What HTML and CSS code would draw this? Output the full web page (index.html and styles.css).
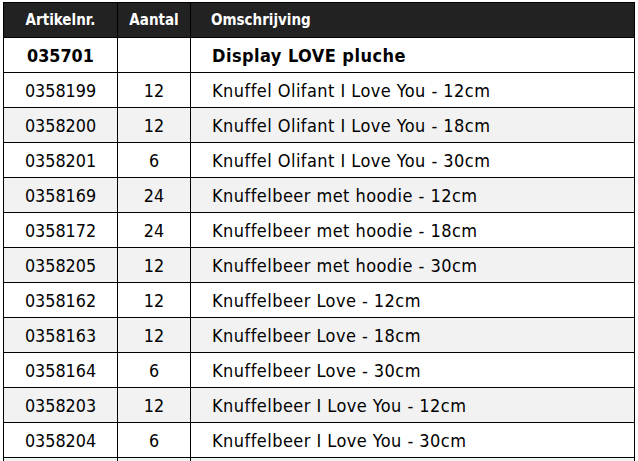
FILE: index.html
```html
<!DOCTYPE html>
<html lang="nl">
<head>
<meta charset="utf-8">
<title>Display LOVE pluche</title>
<link rel="stylesheet" href="styles.css">
</head>
<body>
<table class="products">
  <thead>
    <tr>
      <th class="c-nr">Artikelnr.</th>
      <th class="c-qty">Aantal</th>
      <th class="c-desc">Omschrijving</th>
    </tr>
  </thead>
  <tbody>
    <tr class="group"><td class="c-nr">035701</td><td class="c-qty"></td><td class="c-desc">Display LOVE pluche</td></tr>
    <tr><td class="c-nr">0358199</td><td class="c-qty">12</td><td class="c-desc">Knuffel Olifant I Love You - 12cm</td></tr>
    <tr class="alt"><td class="c-nr">0358200</td><td class="c-qty">12</td><td class="c-desc">Knuffel Olifant I Love You - 18cm</td></tr>
    <tr><td class="c-nr">0358201</td><td class="c-qty">6</td><td class="c-desc">Knuffel Olifant I Love You - 30cm</td></tr>
    <tr class="alt"><td class="c-nr">0358169</td><td class="c-qty">24</td><td class="c-desc">Knuffelbeer met hoodie - 12cm</td></tr>
    <tr><td class="c-nr">0358172</td><td class="c-qty">24</td><td class="c-desc">Knuffelbeer met hoodie - 18cm</td></tr>
    <tr class="alt"><td class="c-nr">0358205</td><td class="c-qty">12</td><td class="c-desc">Knuffelbeer met hoodie - 30cm</td></tr>
    <tr><td class="c-nr">0358162</td><td class="c-qty">12</td><td class="c-desc">Knuffelbeer Love - 12cm</td></tr>
    <tr class="alt"><td class="c-nr">0358163</td><td class="c-qty">12</td><td class="c-desc">Knuffelbeer Love - 18cm</td></tr>
    <tr><td class="c-nr">0358164</td><td class="c-qty">6</td><td class="c-desc">Knuffelbeer Love - 30cm</td></tr>
    <tr class="alt"><td class="c-nr">0358203</td><td class="c-qty">12</td><td class="c-desc">Knuffelbeer I Love You - 12cm</td></tr>
    <tr><td class="c-nr">0358204</td><td class="c-qty">6</td><td class="c-desc">Knuffelbeer I Love You - 30cm</td></tr>
    <tr class="alt"><td class="c-nr"></td><td class="c-qty"></td><td class="c-desc"></td></tr>
  </tbody>
</table>
</body>
</html>
```
FILE: styles.css
```css
html, body {
  margin: 0;
  padding: 0;
  background: #ffffff;
}

body {
  padding: 2px 0 0 3px;
  font-family: "DejaVu Sans Condensed", "DejaVu Sans", sans-serif;
  font-stretch: condensed;
  color: #000000;
}

.products {
  border-collapse: collapse;
  width: 632px;
  table-layout: fixed;
}

.products th,
.products td {
  border: 1px solid #000000;
  padding: 0;
  height: 34px;
  vertical-align: middle;
  white-space: nowrap;
}

.products th {
  background: #222222;
  color: #ffffff;
  font-weight: bold;
  font-size: 15px;
}

.products td {
  font-size: 17.8px;
}

.products .c-nr {
  width: 113px;
  text-align: center;
}

.products .c-qty {
  width: 72px;
  text-align: center;
}

.products .c-desc {
  text-align: left;
  padding-left: 20px;
}

.products td.c-desc {
  padding-left: 21px;
  font-size: 18px;
  letter-spacing: 0.45px;
}

.products tr.alt td {
  background: #f2f2f2;
}

.products tr.group td {
  font-weight: bold;
}
```
